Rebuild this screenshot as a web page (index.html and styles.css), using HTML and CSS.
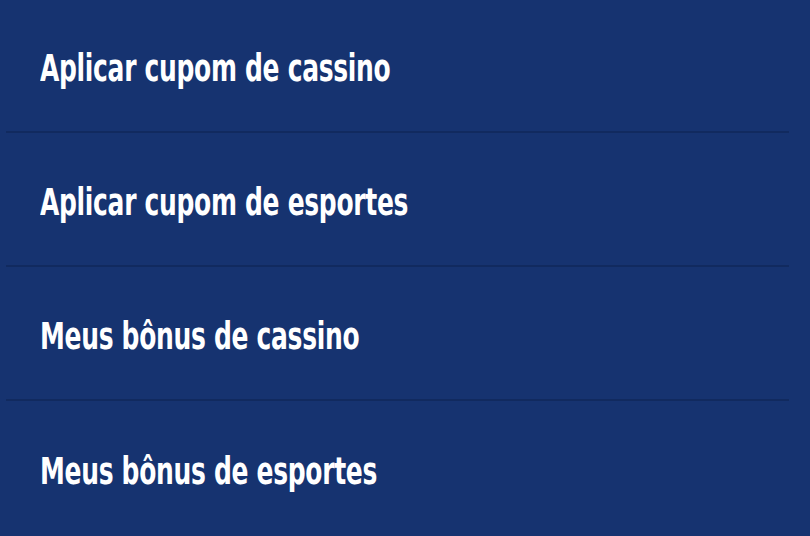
FILE: index.html
```html
<!DOCTYPE html>
<html>
    <head>
        <link rel="stylesheet" href="styles.css">
    </head>

    <body>
        <ul class="menu">
            <li class="item"><a href="#">Aplicar cupom de cassino</a></li>
            <li class="item"><a href="#">Aplicar cupom de esportes</a></li>
            <li class="item"><a href="#">Meus bônus de cassino</a></li>
            <li class="item"><a href="#">Meus bônus de esportes</a></li>
        </ul>
    </body>
</html>
```

FILE: styles.css
```css
body {
    margin: 0;
    background: #163370;
    height: 536px;
    overflow: hidden;
}

.menu {
    list-style: none;
    margin: 0;
    padding: 0;
}

.item {
    box-sizing: border-box;
    height: 134px;
    display: flex;
    align-items: center;
    margin: 0 21px 0 6px;
    padding: 6px 0 0 34px;
    border-bottom: 2px solid #112a5f;
}

.item:first-child {
    height: 133px;
}

.item:last-child {
    border-bottom: 0;
}

.item a {
    display: inline-block;
    color: #fff;
    text-decoration: none;
    font-family: "DejaVu Sans Condensed", "DejaVu Sans", sans-serif;
    font-weight: bold;
    font-size: 37px;
    letter-spacing: -0.4px;
    white-space: nowrap;
    /* narrow the face down to a condensed width */
    transform: scaleX(0.75);
    transform-origin: 0 50%;
}
```
